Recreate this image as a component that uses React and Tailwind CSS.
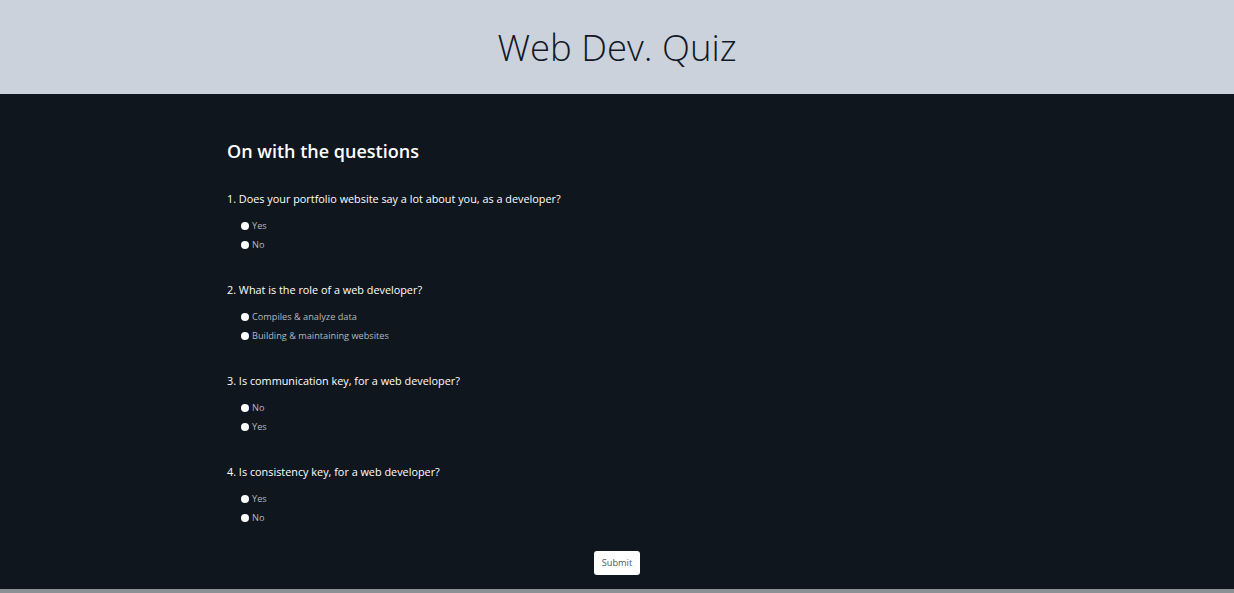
const questions = [
  {
    id: "q1",
    text: "1. Does your portfolio website say a lot about you, as a developer?",
    options: ["Yes", "No"],
  },
  {
    id: "q2",
    text: "2. What is the role of a web developer?",
    options: ["Compiles & analyze data", "Building & maintaining websites"],
  },
  {
    id: "q3",
    text: "3. Is communication key, for a web developer?",
    options: ["No", "Yes"],
  },
  {
    id: "q4",
    text: "4. Is consistency key, for a web developer?",
    options: ["Yes", "No"],
  },
];

export default function App() {
  return (
    <div className="font-['Open_Sans',sans-serif]">
      <header className="flex h-[94px] items-center justify-center bg-[#cbd2db]">
        <h1 className="text-[36.5px] font-light leading-none text-[#111827]">Web Dev. Quiz</h1>
      </header>

      <main className="bg-[#0f161d] pt-[43px] pb-[14px]">
        <form className="mx-auto w-[780px]">
          <h2 className="text-[18px] font-semibold leading-[28px] text-white">On with the questions</h2>

          <div className="mt-[25px]">
            {questions.map(q => (
              <fieldset key={q.id} className="mb-[27px] last:mb-[24px]">
                <legend className="text-[10.85px] leading-[18px] text-white">{q.text}</legend>
                <div className="mt-[8px] pl-[14px]">
                  {q.options.map(opt => (
                    <label key={opt} className="flex h-[19px] items-center gap-[3px] text-[9.2px] text-[#b4b8bd]">
                      <input
                        type="radio"
                        name={q.id}
                        className="h-[8px] w-[8px] appearance-none rounded-full bg-white"
                      />
                      {opt}
                    </label>
                  ))}
                </div>
              </fieldset>
            ))}
          </div>

          <div className="flex justify-center">
            <button
              type="button"
              className="h-[24px] rounded-[3px] bg-white px-[8px] text-[9.2px] text-[#4b5563]"
            >
              Submit
            </button>
          </div>
        </form>
      </main>
      <div className="h-[4px] bg-[#8c9196]" />
    </div>
  );
}
